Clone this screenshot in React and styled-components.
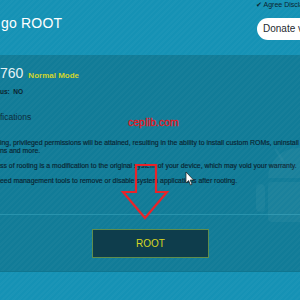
import styled, { createGlobalStyle } from 'styled-components';

const GlobalStyle = createGlobalStyle`
  html, body { margin: 0; padding: 0; background: #117c98; }
  body { font-family: "Liberation Sans", Arial, sans-serif; }
`

const stripes = `repeating-linear-gradient(135deg, rgba(255,255,255,0.025) 0 2px, rgba(0,0,0,0) 2px 4px)`

const Page = styled.div`
width: 300px;
height: 300px;
overflow: hidden;
position: relative;
display: flex;
flex-direction: column;
`
const Header = styled.div`
height: 55px;
flex-shrink: 0;
background: ${stripes}, #1592b5;
display: flex;
justify-content: space-between;
`
const Brand = styled.div`
color: #fff;
font-size: 14px;
line-height: 14px;
padding-top: 16px;
margin-left: 1px;
letter-spacing: 0.2px;
`
const Side = styled.div`
width: 45px;
display: flex;
flex-direction: column;
align-items: flex-start;
`
const Agree = styled.div`
font-size: 7px;
line-height: 8px;
margin-top: 1px;
color: #0b2430;
white-space: nowrap;
margin-left: 1px;
`
const Donate = styled.div`
margin-top: 9px;
margin-left: 2px;
width: 60px;
height: 22px;
flex-shrink: 0;
box-sizing: border-box;
background: #fff;
border-radius: 11px;
padding-left: 6px;
font-size: 10px;
line-height: 22px;
color: #1e2a30;
white-space: nowrap;
`
const Info = styled.div`
height: 159px;
flex-shrink: 0;
background: ${stripes}, #117c98;
position: relative;
border-bottom: 1px solid #2893ad;
`
const TitleRow = styled.div`
display: flex;
align-items: baseline;
gap: 5px;
margin-top: 10px;
`
const Model = styled.span`
color: #e6f2f5;
font-size: 14px;
line-height: 16px;
font-weight: 300;
`
const Mode = styled.span`
color: #d2d62c;
font-size: 8px;
font-weight: bold;
`
const Status = styled.div`
margin-top: 7px;
font-size: 6.5px;
font-weight: bold;
color: #0b2430;
line-height: 8px;
`
const Section = styled.div`
margin-top: 16px;
font-size: 8.5px;
line-height: 10px;
color: #0e2c3a;
`
const Para = styled.p`
margin: ${p => p.$gap}px 0 0;
font-size: 6.9px;
line-height: 8px;
color: #0a2431;
white-space: nowrap;
-webkit-text-stroke: 0.15px #0a2431;
`
const Watermark = styled.div`
position: absolute;
left: 128px;
top: 61px;
color: #e3191f;
font-size: 10.5px;
line-height: 12px;
-webkit-text-stroke: 0.3px #e3191f;
`
const Overlay = styled.svg`
position: absolute;
left: 0;
top: 0;
pointer-events: none;
`
const ButtonArea = styled.div`
height: 56px;
flex-shrink: 0;
background: ${stripes}, #117c98;
display: flex;
justify-content: center;
align-items: center;
`
const RootButton = styled.div`
width: 117px;
height: 29px;
box-sizing: border-box;
margin-left: 1px;
background: #0e3d4c;
border: 1px solid #5f8d4c;
color: #d6d624;
font-size: 10px;
display: flex;
align-items: center;
justify-content: center;
`
const Footer = styled.div`
flex: 1;
background: ${stripes}, #1592b5;
border-top: 1px solid #0f7690;
`

const App = () => {
  return (
    <Page>
      <GlobalStyle />
      <Header>
        <Brand>go ROOT</Brand>
        <Side>
          <Agree>✔ Agree Disclaimer</Agree>
          <Donate>Donate via PayPal</Donate>
        </Side>
      </Header>
      <Info>
        <TitleRow>
          <Model>760</Model>
          <Mode>Normal Mode</Mode>
        </TitleRow>
        <Status>us:&nbsp; NO</Status>
        <Section>fications</Section>
        <Para $gap={17}>ing, privileged permissions will be attained, resulting in the ability to install custom ROMs, uninstall</Para>
        <Para $gap={0}>ns and more.</Para>
        <Para $gap={7}>ss of rooting is a modification to the original system of your device, which may void your warranty.</Para>
        <Para $gap={7}>eed management tools to remove or disable system applications after rooting.</Para>
        <Watermark>cepIib.com</Watermark>
      </Info>
      <ButtonArea>
        <RootButton>ROOT</RootButton>
      </ButtonArea>
      <Footer />
      <Overlay width="300" height="300" viewBox="0 0 300 300">
        <g fill="rgba(255,255,255,0.04)">
          <path d="M268 178 A30 30 0 0 1 328 178 Z" />
          <rect x="268" y="182" width="60" height="40" rx="4" />
          <rect x="256" y="184" width="9" height="28" rx="4.5" />
          <line x1="276" y1="150" x2="283" y2="161" stroke="rgba(255,255,255,0.04)" strokeWidth="2.5" strokeLinecap="round" />
        </g>
        <polygon points="136,165 156,165 156,192 167,192 145,218 123,192 136,192" fill="none" stroke="#e8242a" strokeWidth="2.2" strokeLinejoin="miter" />
        <path d="M186 172 L186 183 L188.6 180.6 L190.5 185 L192 184.3 L190.2 180 L193.6 180 Z" fill="#fff" stroke="#1a1a1a" strokeWidth="0.7" />
      </Overlay>
    </Page>
  )
}

export default App
